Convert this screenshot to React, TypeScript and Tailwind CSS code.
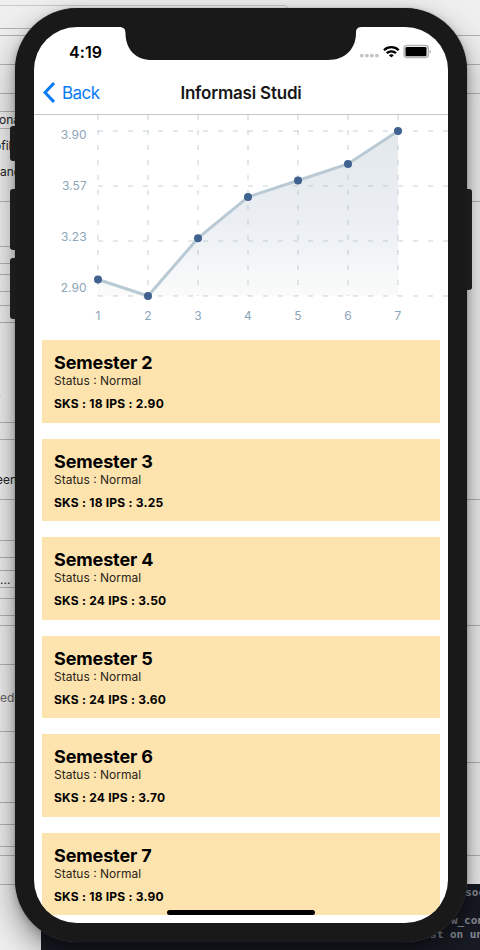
import React from "react";

const leftLines = [28, 35, 64, 93, 111, 128, 201, 246, 263, 274, 291, 305, 322, 422, 439, 499, 540, 557, 570, 587, 598, 615, 625, 664, 731, 762, 802, 824, 846, 855, 884];
const rightLines = [35, 64, 93, 201, 499, 625, 762, 855];

const semesters = [
  { n: 2, sks: 18, ips: "2.90" },
  { n: 3, sks: 18, ips: "3.25" },
  { n: 4, sks: 24, ips: "3.50" },
  { n: 5, sks: 24, ips: "3.60" },
  { n: 6, sks: 24, ips: "3.70" },
  { n: 7, sks: 18, ips: "3.90" },
];

const points: [number, number][] = [
  [64, 164.5], [114, 181], [164, 123.2], [214, 82], [264, 65.5], [314, 49], [364, 16],
];
const line = points.map((p) => p.join(",")).join(" ");

function Desktop() {
  return (
    <div className="absolute inset-0 flex flex-col justify-between overflow-hidden bg-[#efefef] text-[12px] leading-[14px] text-[#222]">
      <svg className="absolute inset-0" width="480" height="950" viewBox="0 0 480 950" fill="none" stroke="#b2b2b2">
        <path d="M0 5.500H284Q287.500 5.500 287.500 9" stroke="#c8c8c8" />
        {leftLines.map((y) => (
          <path key={y} d={`M0 ${y + 0.5}H40`} />
        ))}
        {rightLines.map((y) => (
          <path key={y} d={`M440 ${y + 0.5}H480`} />
        ))}
      </svg>
      <div className="flex w-10 flex-col items-start pt-[113px]">
        <span className="-ml-px">ona</span>
        <span className="-ml-1.5 mt-3">ofil</span>
        <span className="mt-3">and</span>
        <span className="-ml-1 mt-[212px] text-[#8aaecb]">r</span>
        <span className="-ml-1 mt-[68px]">een</span>
        <span className="mt-[86px]">...</span>
        <span className="mt-[104px] text-[#666]">ede</span>
      </div>
      <div className="ml-[41px] flex h-[66px] flex-col items-end bg-[#181a24] pt-[2px] font-['DejaVu_Sans_Mono','Liberation_Mono',monospace] text-[11px] font-bold text-[#878c96]">
        <span className="-mr-[5px]">soc</span>
        <span className="-mr-[4px] mt-[14px]">w_con</span>
        <span className="-mr-[3px]">st on un</span>
      </div>
    </div>
  );
}

function StatusBar() {
  return (
    <div className="flex h-[44px] items-start justify-between pl-[35px] pr-[17px] pt-[16px]">
      <span className="text-[16px] font-semibold leading-[18px] tracking-[0.1px] text-black">4:19</span>
      <svg className="mt-px" width="72" height="16" viewBox="0 0 72 16">
        <g fill="#c4c4c4">
          <circle cx="2.8" cy="11.6" r="1.9" />
          <circle cx="7.9" cy="11.6" r="1.9" />
          <circle cx="12.9" cy="11.6" r="1.9" />
          <circle cx="17.9" cy="11.6" r="1.9" />
        </g>
        <g fill="none" stroke="#000" strokeWidth="2.3">
          <path d="M25 6.2c4.100-4 10.600-4 14.700 0" />
          <path d="M27.700 9.200c2.600-2.500 6.700-2.500 9.300 0" />
        </g>
        <path d="M29.900 11.200c1.400-1.200 3.500-1.200 4.900 0l-2.450 2.300z" fill="#000" />
        <rect x="45.100" y="1.600" width="24.200" height="12" rx="3" fill="#fff" stroke="#b4b4b4" strokeWidth="1.500" />
        <rect x="46.500" y="3" width="21" height="9.200" rx="1.300" fill="#000" />
        <path d="M70.600 6v3.400q1.400-.4 1.400-1.700t-1.400-1.700" fill="#aaa" />
      </svg>
    </div>
  );
}

function NavBar() {
  return (
    <div className="grid h-[44px] grid-cols-[1fr_auto_1fr] items-center border-b border-[#c7c7c7]">
      <div className="flex items-center gap-[7px] pl-[9px] text-[#087bf7]">
        <svg width="12" height="21" viewBox="0 0 12 21" fill="none" stroke="currentColor" strokeWidth="3">
          <path d="M11 1 2 10.500 11 20" />
        </svg>
        <span className="text-[17px] leading-5 tracking-[-0.55px]">Back</span>
      </div>
      <h1 className="text-[17px] font-semibold leading-5 tracking-[-0.2px] text-[#171717]">Informasi Studi</h1>
      <div />
    </div>
  );
}

function Chart() {
  return (
    <svg className="block shrink-0" width="414" height="225" viewBox="0 0 414 225">
      <defs>
        <linearGradient id="area" x1="0" y1="0" x2="0" y2="1">
          <stop offset="0" stopColor="#e3e8eb" />
          <stop offset=".55" stopColor="#ebeff4" />
          <stop offset="1" stopColor="#fafbfa" />
        </linearGradient>
      </defs>
      <polygon points={`64,181 ${line} 364,181`} fill="url(#area)" />
      <polyline points={line} fill="none" stroke="#b9cad5" strokeWidth="3" />
      <g stroke="#b4c1ca" strokeOpacity=".5" strokeWidth="1.500" strokeDasharray="5 10">
        {[16, 71, 126, 181].map((y) => (
          <path key={y} d={`M64 ${y}H414`} />
        ))}
        {points.map(([x]) => (
          <path key={x} d={`M${x} 0V181`} />
        ))}
      </g>
      {points.map(([x, y]) => (
        <circle key={x} cx={x} cy={y} r="4" fill="#40628f" />
      ))}
      <g fill="#8ba5ba" fontSize="12">
        <g textAnchor="end" letterSpacing=".1">
          <text x="52.800" y="24.300">3.90</text>
          <text x="52.800" y="75.300">3.57</text>
          <text x="52.800" y="126.300">3.23</text>
          <text x="52.800" y="177.300">2.90</text>
        </g>
        <g textAnchor="middle">
          {points.map(([x], i) => (
            <text key={x} x={x} y="205.300">{i + 1}</text>
          ))}
        </g>
      </g>
    </svg>
  );
}

export default function App() {
  return (
    <main className="relative h-[950px] w-[480px] overflow-hidden font-['Inter','Liberation_Sans',sans-serif]">
      <Desktop />
      <div className="relative flex pl-[10px] pt-[8px]">
        <div className="flex w-[5px] flex-col pt-[118px]">
          <div className="h-[35px] w-4 rounded-[3px] bg-[#242424]" />
          <div className="mt-7 h-[61px] w-4 rounded-[3px] bg-[#242424]" />
          <div className="mt-2 h-[61px] w-4 rounded-[3px] bg-[#242424]" />
        </div>
        <div className="z-10 h-[934px] w-[452px] shrink-0 rounded-[62px] bg-[#191919] p-[19px] shadow-[0_0_1px_#555,0_3px_9px_rgba(0,0,0,0.22),0_14px_32px_rgba(0,0,0,0.42)]">
          <div className="relative flex h-[896px] w-[414px] flex-col overflow-hidden rounded-[43px] bg-white">
            <StatusBar />
            <NavBar />
            <Chart />
            <div className="flex flex-col gap-4 px-2">
              {semesters.map((s) => (
                <section key={s.n} className="h-[82.5px] shrink-0 bg-[#fde3ae] pl-3 pt-[12.4px] text-black">
                  <h2 className="text-[18px] font-bold leading-[21px] tracking-[-0.13px]">Semester {s.n}</h2>
                  <p className="text-[12px] leading-[15px] text-[#2c2518]">Status : Normal</p>
                  <p className="mt-2 text-[12px] font-bold leading-[15px] tracking-[0.22px]">SKS : {s.sks} IPS : {s.ips}</p>
                </section>
              ))}
            </div>
            <svg className="absolute left-[85px] top-0" width="244" height="34" viewBox="0 0 244 34">
              <path d="M0 0C5 0 6.500 2 6.500 7C7 23 17 33 33 33H209C226 33 237 22 237 6C237 1 239 0 244 0Z" fill="#191919" />
            </svg>
            <div className="absolute bottom-[8px] left-[133px] h-[5px] w-[148px] rounded-full bg-black" />
          </div>
        </div>
        <div className="flex w-[5px] flex-col items-end pt-[181px]">
          <div className="h-[101px] w-4 shrink-0 rounded-[3px] bg-[#242424]" />
        </div>
      </div>
      <svg className="absolute left-[105px] top-[97px]" width="15" height="22" viewBox="0 0 15 22">
        <path d="M1.500 1.500V16l3.300-3 2.400 5.600 2.600-1.100-2.400-5.500h4.700z" fill="#111" stroke="#fff" strokeWidth="1.200" />
      </svg>
    </main>
  );
}
